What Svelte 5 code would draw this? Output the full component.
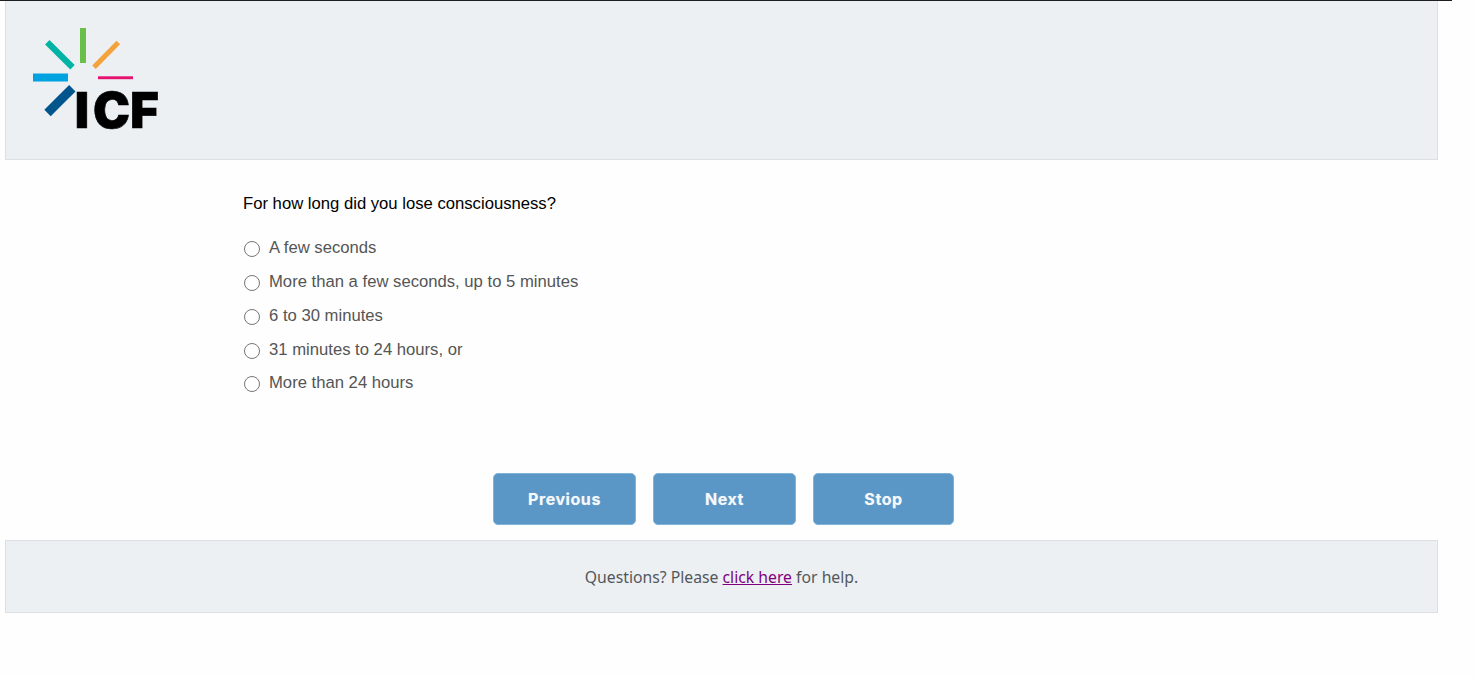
<script>
  const options = [
    'A few seconds',
    'More than a few seconds, up to 5 minutes',
    '6 to 30 minutes',
    '31 minutes to 24 hours, or',
    'More than 24 hours'
  ];
  const buttons = ['Previous', 'Next', 'Stop'];
</script>

<div class="page">
  <div class="topline"></div>
  <header class="banner">
    <svg class="logo" width="140" height="125" viewBox="28 24 140 125" aria-label="ICF logo">
      <rect x="80" y="28" width="6" height="35" fill="#6abf4b" />
      <line x1="94" y1="67.3" x2="118.3" y2="42.5" stroke="#f4a23c" stroke-width="5" />
      <line x1="47.3" y1="42.2" x2="72.5" y2="67.3" stroke="#00b3a4" stroke-width="6.2" />
      <rect x="33" y="73.5" width="35" height="8" fill="#00a3e0" />
      <rect x="98" y="76.3" width="35" height="2.9" fill="#e5126f" />
      <line x1="47.5" y1="113" x2="72.3" y2="88.2" stroke="#00558c" stroke-width="9" />
      <text class="wordmark" x="74.8 93 130" y="128.2">ICF</text>
    </svg>
  </header>

  <main class="survey">
    <p class="question">For how long did you lose consciousness?</p>
    <div class="options">
      {#each options as option}
        <label class="option">
          <input type="radio" name="loc" />
          <span>{option}</span>
        </label>
      {/each}
    </div>
  </main>

  <nav class="actions">
    {#each buttons as b}
      <button type="button">{b}</button>
    {/each}
  </nav>

  <footer class="help">
    Questions? Please <a href="#help">click here</a> for help.
  </footer>
</div>

<style>
  :global(body) {
    margin: 0;
    background: #fefefe;
  }
  .page {
    width: 1476px;
    height: 677px;
    overflow: hidden;
    box-sizing: border-box;
    background: #fefefe;
  }
  .topline {
    width: 1452px;
    height: 1px;
    background: #1c1f22;
  }
  .banner {
    box-sizing: border-box;
    margin-left: 5px;
    width: 1433px;
    height: 159px;
    background: #ecf0f3;
    border: 1px solid #dcdfe3;
    border-top: 0;
    padding: 23px 0 0 22px;
    overflow: hidden;
  }
  .logo {
    display: block;
  }
  .wordmark {
    font-family: Inter, "Liberation Sans", sans-serif;
    font-weight: 900;
    font-size: 49.5px;
    fill: #000;
    stroke: #000;
    stroke-width: 0.6px;
  }
  .survey {
    padding: 35px 0 0 243px;
    height: 313px;
    box-sizing: border-box;
    font-family: "Liberation Sans", Arial, sans-serif;
    font-size: 16.66px;
  }
  .question {
    margin: 0 0 18.425px;
    line-height: 18px;
    color: #000;
  }
  .options {
    display: flex;
    flex-direction: column;
  }
  .option {
    display: flex;
    align-items: center;
    height: 33.75px;
    color: #555555;
    line-height: 18px;
  }
  .option input {
    appearance: none;
    box-sizing: border-box;
    width: 16px;
    height: 16px;
    margin: 2px 9px 0 1px;
    border: 1.5px solid #767676;
    border-radius: 50%;
    background: #fff;
    flex: none;
  }
  .actions {
    display: flex;
    justify-content: flex-start;
    gap: 17px;
    padding-left: 493px;
    height: 68px;
  }
  .actions button {
    box-sizing: border-box;
    width: 143px;
    height: 52px;
    background: #5a96c6;
    border: 1px solid #7fb3d8;
    border-radius: 5px;
    color: #f4f8fb;
    font-family: Inter, "Liberation Sans", sans-serif;
    font-weight: 700;
    font-size: 16px;
    letter-spacing: 0.55px;
    text-shadow: 0 0 1px rgba(255, 255, 255, 0.45);
    padding: 0;
  }
  .actions button:last-child {
    width: 141px;
  }
  .help {
    box-sizing: border-box;
    margin-left: 5px;
    margin-top: -1px;
    width: 1433px;
    height: 73px;
    background: #ecf0f3;
    border: 1px solid #dcdfe3;
    display: block;
    text-align: center;
    line-height: 73px;
    font-family: "Noto Sans", sans-serif;
    font-size: 15.75px;
    color: #53575b;
  }
  .help a {
    color: #800080;
  }
</style>
